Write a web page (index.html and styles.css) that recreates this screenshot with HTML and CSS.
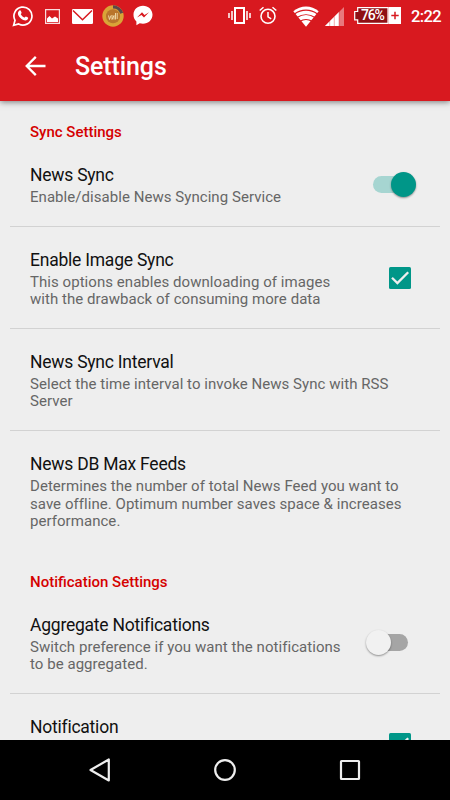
FILE: index.html
```html
<!DOCTYPE html>
<html lang="en">
<head>
    <meta charset="UTF-8">
    <meta name="viewport" content="width=device-width, initial-scale=1.0">
    <title>Settings</title>
    <link rel="stylesheet" href="styles.css">
</head>
<body>
<header>
    <div class="status-bar">
        <!-- notifications -->
        <svg class="whatsapp" width="22" height="22" viewBox="0 0 22 22">
            <path d="M1.6 20.4L3 15.3A9 9 0 1 1 6.7 19z" fill="none" stroke="#fff" stroke-width="1.7"/>
            <path d="M7.4 5.6c.6-.5 1.2-.3 1.4.2l.8 1.9c.1.5-.8 1.2-.8 1.5.8 1.6 2 2.7 3.6 3.4.5 0 1.1-1.2 1.5-1.1l2.1 1c.5.3-.1 1.9-.7 2.3-1.2.9-2.7.7-4.1.1-2.3-1-4.1-2.9-5-4.9-.6-1.7-.2-3.3 1.2-4.4z" fill="#fff"/>
        </svg>
        <svg class="picture" width="15" height="15" viewBox="0 0 15 15">
            <path d="M.6.6h13.8v13.8H.6z" fill="none" stroke="#fff" stroke-opacity=".85" stroke-width="1.2"/>
            <path d="M2 13V9.5L4.5 7 7 9.5l3-2 3 2V13z" fill="#fff"/>
        </svg>
        <svg class="mail" width="21" height="15" viewBox="0 0 21 15">
            <rect width="21" height="15" rx="1.2" fill="#fff"/>
            <path d="M1 1.5l9.5 9.3L20 1.5" fill="none" stroke="#d8191f" stroke-width="1.5"/>
        </svg>
        <svg class="badge" width="22" height="22" viewBox="0 0 22 22">
            <circle cx="11" cy="11" r="10.7" fill="#d9a437"/>
            <path d="M11 1.9A9.1 9.1 0 0 1 19.7 8.3" fill="none" stroke="#5a4a4b" stroke-width="3.2"/>
            <circle cx="11" cy="11.2" r="7" fill="#b9752c"/>
            <path d="M6.5 10.5l1 4 1.5-4M10 10v4.5l2-4v4M13.5 8v6.5M15.2 8v6" fill="none" stroke="#f3dfb0" stroke-width=".9"/>
        </svg>
        <svg class="messenger" width="20" height="21" viewBox="0 0 20 21">
            <path d="M10 .7C4.6.7.5 4.5.5 9.7c0 2.7 1 5 2.9 6.7v3.8l3.3-1.9c1 .3 2.1.4 3.3.4 5.3 0 9.500-3.900 9.500-9S15.300.7 10 .7z" fill="#fff"/>
            <path d="M4 12.500l5-5.300 2.500 2.700L16 7.300l-5 5.300L8.500 10z" fill="#d8191f"/>
        </svg>
        <!-- system -->
        <svg class="vibrate" width="23" height="17" viewBox="0 0 23 17">
            <path d="M7 1h9v15H7z" fill="none" stroke="#fff" stroke-width="2"/>
            <path d="M4 4v9M1 6v5M19 4v9M22 6v5" stroke="#fff" stroke-width="1.5"/>
        </svg>
        <svg class="alarm" width="18" height="19" viewBox="0 0 18 19">
            <circle cx="9" cy="10.3" r="7" fill="none" stroke="#fff" stroke-width="1.6"/>
            <path d="M9 6v4.8l3.2 2M.7 4.5l3.800-3.300M17.300 4.500l-3.800-3.300" fill="none" stroke="#fff" stroke-width="1.5"/>
        </svg>
        <svg class="wifi" width="26" height="21" viewBox="0 0 26 21">
            <path d="M.3 5.2C7.5-1.2 18.5-1.2 25.7 5.2L13 20.7z" fill="#fff"/>
            <path d="M1.5 8C8.5 2.9 17.5 2.9 24.5 8M4 11.5c5.5-3.700 12.500-3.700 18 0M7 15.300c3.500-2.300 8.500-2.300 12 0" fill="none" stroke="#d8191f" stroke-width="1.2"/>
        </svg>
        <svg class="signal" width="19" height="19" viewBox="0 0 19 19">
            <path d="M0 19L19 0v19z" fill="#fff" fill-opacity=".42"/>
            <path d="M0 19L14 5v14z" fill="#fff"/>
            <path d="M4.7 14v5M9.3 9.5V19M14 4v15" stroke="#d8191f" stroke-opacity=".45" stroke-width=".8"/>
        </svg>
        <div class="battery">
            <svg width="47" height="17" viewBox="0 0 47 17">
                <path d="M3.7.7H34v15.6H3.7v-3.5H.7V4.5h3z" fill="#8f1015" stroke="#fff" stroke-width="1.2"/>
                <path d="M34.5 0H47v17H34.5z" fill="#fff"/>
                <path d="M41 4.8v7.4M37.3 8.500h7.400" stroke="#d8191f" stroke-width="1.5"/>
            </svg>
            <span>76%</span>
        </div>
        <span class="clock">2:22</span>
    </div>
    <div class="toolbar">
        <svg width="21" height="20" viewBox="0 0 21 20">
            <path d="M20.5 10H2M10.8.9L1.7 10l9.1 9.1" fill="none" stroke="#fff" stroke-width="2.3"/>
        </svg>
        <h1>Settings</h1>
    </div>
</header>

<main>
    <h2>Sync Settings</h2>
    <div class="pref">
        <div>
            <h3>News Sync</h3>
            <p>Enable/disable News Syncing Service</p>
        </div>
        <div class="switch on"></div>
    </div>
    <div class="pref">
        <div>
            <h3>Enable Image Sync</h3>
            <p>This options enables downloading of images<br>with the drawback of consuming more data</p>
        </div>
        <svg class="checkbox" width="22" height="22" viewBox="0 0 22 22">
            <rect width="22" height="22" rx="1.5" fill="#009688"/>
            <path d="M3 10.7l5.4 5.4L19.2 5.2" fill="none" stroke="#eee" stroke-width="2.3"/>
        </svg>
    </div>
    <div class="pref">
        <div>
            <h3>News Sync Interval</h3>
            <p>Select the time interval to invoke News Sync with RSS<br>Server</p>
        </div>
    </div>
    <div class="pref last">
        <div>
            <h3>News DB Max Feeds</h3>
            <p>Determines the number of total News Feed you want to<br>save offline. Optimum number saves space &amp; increases<br>performance.</p>
        </div>
    </div>

    <h2>Notification Settings</h2>
    <div class="pref">
        <div>
            <h3>Aggregate Notifications</h3>
            <p>Switch preference if you want the notifications<br>to be aggregated.</p>
        </div>
        <div class="switch"></div>
    </div>
    <div class="pref cut">
        <div>
            <h3>Notification</h3>
        </div>
        <svg class="checkbox" width="22" height="22" viewBox="0 0 22 22">
            <rect width="22" height="22" rx="1.5" fill="#009688"/>
            <path d="M3 10.7l5.4 5.4L19.2 5.2" fill="none" stroke="#eee" stroke-width="2.3"/>
        </svg>
    </div>
</main>

<nav>
    <svg width="24" height="26" viewBox="0 0 24 26">
        <path d="M20.8 2.5v21L2.5 13z" fill="none" stroke="#eee" stroke-width="2.2" stroke-linejoin="round"/>
    </svg>
    <svg width="24" height="24" viewBox="0 0 24 24">
        <circle cx="12" cy="12" r="9.8" fill="none" stroke="#eee" stroke-width="2.2"/>
    </svg>
    <svg width="24" height="24" viewBox="0 0 24 24">
        <rect x="3" y="3" width="18" height="18" rx=".5" fill="none" stroke="#eee" stroke-width="2.2"/>
    </svg>
</nav>
</body>
</html>
```
FILE: styles.css
```css
body {
    margin: 0;
    height: 800px;
    display: flex;
    flex-direction: column;
    overflow: hidden;
    background: #eee;
    font-family: Roboto, sans-serif
}

h1, h2, h3, p {
    margin: 0
}

svg {
    display: block;
    flex: none
}

header {
    height: 101px;
    flex: none;
    background: #d8191f;
    color: #fff;
    box-shadow: 0 1px 6px rgba(0, 0, 0, .5);
    position: relative
}

.status-bar {
    height: 31px;
    display: flex;
    align-items: center;
    padding-left: 12px
}

.picture {
    margin: 1px 0 0 11px
}

.mail {
    margin: 1px 0 0 12px
}

.badge {
    margin-left: 9px
}

.messenger {
    margin-left: 9px
}

.vibrate {
    margin-left: 75px
}

.alarm {
    margin-left: 8px
}

.wifi {
    margin: 1px 0 0 16px
}

.signal {
    margin: 2px 0 0 6px
}

.battery {
    margin-left: 10px;
    position: relative
}

.battery span {
    position: absolute;
    left: 7px;
    top: 0;
    font-size: 14px;
    line-height: 17px;
    font-weight: 500;
    letter-spacing: -1.2px
}

.clock {
    margin: 1px 0 0 10px;
    font-size: 16.5px;
    letter-spacing: -.6px;
    font-weight: 500
}

.toolbar {
    height: 70px;
    display: flex;
    align-items: center;
    padding-left: 25px
}

h1 {
    margin: 1px 0 0 29px;
    font-size: 25px;
    font-weight: 500;
    letter-spacing: -.1px
}

main {
    flex: 1;
    min-height: 0;
    overflow: hidden
}

h2 {
    box-sizing: border-box;
    height: 41px;
    padding: 22px 30px 0;
    font-size: 15px;
    line-height: 18px;
    font-weight: 500;
    color: #d50000
}

.pref {
    display: flex;
    justify-content: space-between;
    align-items: center;
    margin: 0 10px;
    padding: 22px 24px 19px 20px;
    border-bottom: 1px solid #d2d2d2
}

.last {
    border-color: transparent
}

h3 {
    font-size: 17.5px;
    line-height: 22px;
    font-weight: 400;
    letter-spacing: -.23px;
    color: #111
}

p {
    margin-top: 3px;
    font-size: 15px;
    line-height: 17.6px;
    letter-spacing: .05px;
    color: #666;
    white-space: nowrap
}

.checkbox {
    margin: 0 5px 2px 0
}

.cut {
    align-items: flex-start
}

.cut .checkbox {
    margin-top: 17px
}

.switch {
    width: 35px;
    height: 17px;
    margin: 0 8px 2px 0;
    border-radius: 9px;
    background: #a5a5a5;
    display: flex;
    align-items: center
}

.switch::before {
    content: "";
    flex: none;
    width: 25px;
    height: 25px;
    margin-left: -7px;
    border-radius: 50%;
    background: #f1f1f1;
    box-shadow: 0 1px 2px rgba(0, 0, 0, .4)
}

.on {
    background: #a6d5d1
}

.on::before {
    margin-left: 18px;
    background: #009688
}

nav {
    height: 60px;
    flex: none;
    display: flex;
    align-items: center;
    justify-content: space-between;
    padding: 0 88px;
    background: #000
}
```
